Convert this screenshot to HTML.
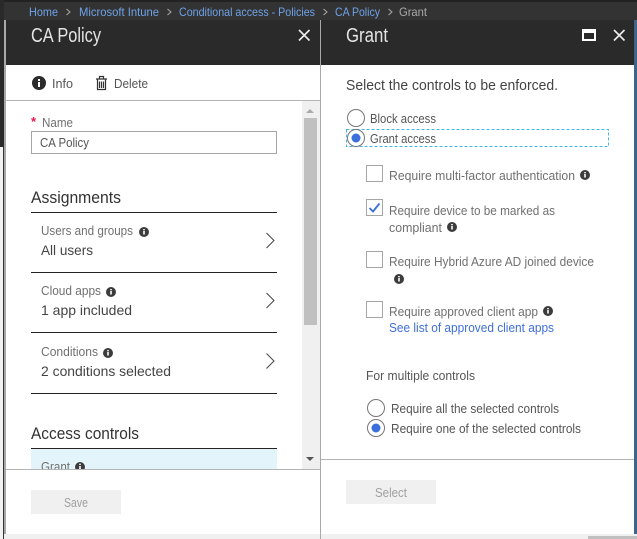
<!DOCTYPE html>
<html><head><meta charset="utf-8"><style>
html,body{margin:0;padding:0;background:#fff;width:637px;height:539px;overflow:hidden}
svg{display:block}
text{font-family:"Liberation Sans",sans-serif;fill:#555;white-space:pre}
.bc{font-size:12px;fill:#6ea3e8}
.h{font-size:20px;fill:#e4e4e4}
.s{font-size:13px}
.m{font-size:14px;fill:#444}
.g{fill:#707070;font-size:13px}
.sec{font-size:17px;fill:#333}
.inf{fill:#3c3c3c}
.rad{fill:#fff;stroke:#767676;stroke-width:1}
.chk{fill:#fff;stroke:#a6a6a6;stroke-width:1}
.chev{fill:none;stroke:#444;stroke-width:1}
</style></head><body>
<svg width="637" height="539" viewBox="0 0 637 539" xmlns="http://www.w3.org/2000/svg">
<rect width="637" height="539" fill="#fff"/>
<!-- top bar -->
<rect width="637" height="20" fill="#333"/>
<rect width="637" height="2" fill="#222"/>
<rect x="0" y="0" width="4" height="147" fill="#2a2a2a"/>
<rect x="0" y="147" width="3" height="392" fill="#f2f2f2"/>
<rect x="3" y="147" width="1" height="392" fill="#333"/>
<rect x="4" y="20" width="2" height="514" fill="#a8a8a8"/>
<text class="bc" x="29" y="16" textLength="29" lengthAdjust="spacingAndGlyphs">Home</text>
<path d="M66.500 9l3.500 3-3.500 3M167.500 9l3.500 3-3.500 3M323.500 9l3.500 3-3.500 3M388.500 9l3.500 3-3.500 3" fill="none" stroke="#aaa"/>
<text class="bc" x="79" y="16" textLength="80" lengthAdjust="spacingAndGlyphs">Microsoft Intune</text>
<text class="bc" x="179" y="16" textLength="136" lengthAdjust="spacingAndGlyphs">Conditional access - Policies</text>
<text class="bc" x="335" y="16" textLength="45" lengthAdjust="spacingAndGlyphs">CA Policy</text>
<text class="bc" x="399" y="16" textLength="28" lengthAdjust="spacingAndGlyphs" style="fill:#aaa">Grant</text>

<!-- left blade header -->
<rect x="6" y="20" width="314" height="45" fill="#2a2a2a"/>
<text class="h" x="31" y="42" textLength="70" lengthAdjust="spacingAndGlyphs">CA Policy</text>
<path d="M299 30l10.500 10.500M309.500 30L299 40.500" stroke="#eee" stroke-width="1.600" fill="none"/>

<!-- commands -->
<circle cx="39" cy="83" r="7" fill="#2b2b2b"/>
<rect x="38" y="82" width="2" height="5" fill="#fff"/><rect x="38" y="79" width="2" height="2" fill="#fff"/>
<path d="M96 79h11M99.500 78.500v-2h4v2M97.500 79.500v10h8v-10M99.500 81.500v6.500M101.500 81.500v6.500M103.500 81.500v6.500" stroke="#333" stroke-width="1.200" fill="none"/>
<text class="s" x="52" y="88" textLength="21" lengthAdjust="spacingAndGlyphs">Info</text>
<text class="s" x="114" y="88" textLength="34" lengthAdjust="spacingAndGlyphs">Delete</text>
<rect x="6" y="100" width="314" height="1" fill="#b4b4b4"/>

<!-- scrollbar -->
<rect x="302" y="101" width="18" height="368" fill="#f0f0f0"/>
<rect x="304" y="118" width="13" height="207" fill="#c0c0c0"/>
<path d="M306 113l4-4 4 4z" fill="#aaa"/>
<path d="M306 457l4 4 4-4z" fill="#555"/>

<!-- form -->
<text x="31" y="126" style="font-size:13px;fill:#e8174f;font-weight:bold">*</text>
<text class="g" x="42" y="127" textLength="31" lengthAdjust="spacingAndGlyphs">Name</text>
<rect x="31.500" y="131.500" width="245" height="22" fill="#fff" stroke="#a6a6a6"/>
<text class="s" x="40" y="147" textLength="49" lengthAdjust="spacingAndGlyphs">CA Policy</text>

<text class="sec" x="31" y="203" textLength="90" lengthAdjust="spacingAndGlyphs">Assignments</text>
<rect x="31" y="212" width="246" height="1" fill="#222"/>
<text class="g" x="41" y="235" textLength="92" lengthAdjust="spacingAndGlyphs">Users and groups</text>
<circle class="inf" cx="144" cy="232" r="5"/><rect x="143.200" y="231" width="1.600" height="3.500" fill="#fff"/><rect x="143.200" y="229" width="1.600" height="1.300" fill="#fff"/>
<text class="m" x="41" y="255" textLength="52" lengthAdjust="spacingAndGlyphs">All users</text>
<path class="chev" d="M266.500 233l7.500 7.500-7.500 7.500"/>
<rect x="31" y="272" width="246" height="1" fill="#222"/>
<text class="g" x="41" y="295" textLength="60" lengthAdjust="spacingAndGlyphs">Cloud apps</text>
<circle class="inf" cx="111" cy="292" r="5"/><rect x="110.200" y="291" width="1.600" height="3.500" fill="#fff"/><rect x="110.200" y="289" width="1.600" height="1.300" fill="#fff"/>
<text class="m" x="41" y="315" textLength="91" lengthAdjust="spacingAndGlyphs">1 app included</text>
<path class="chev" d="M266.500 293l7.500 7.500-7.500 7.500"/>
<rect x="31" y="332" width="246" height="1" fill="#222"/>
<text class="g" x="41" y="356" textLength="57" lengthAdjust="spacingAndGlyphs">Conditions</text>
<circle class="inf" cx="108" cy="353" r="5"/><rect x="107.200" y="352" width="1.600" height="3.500" fill="#fff"/><rect x="107.200" y="350" width="1.600" height="1.300" fill="#fff"/>
<text class="m" x="41" y="376" textLength="130" lengthAdjust="spacingAndGlyphs">2 conditions selected</text>
<path class="chev" d="M266.500 353.500l7.500 7.500-7.500 7.500"/>
<rect x="31" y="393" width="246" height="1" fill="#222"/>
<text class="sec" x="31" y="439" textLength="108" lengthAdjust="spacingAndGlyphs">Access controls</text>
<rect x="31" y="449" width="246" height="20" fill="#e3f5fb"/>
<rect x="31" y="448" width="246" height="1" fill="#222"/>
<text class="g" x="41" y="471" textLength="29" lengthAdjust="spacingAndGlyphs">Grant</text>
<circle class="inf" cx="80" cy="467" r="5"/><rect x="79.200" y="463.700" width="1.600" height="1.300" fill="#fff"/><rect x="79.200" y="466" width="1.600" height="3" fill="#fff"/>
<rect x="6" y="469" width="314" height="65" fill="#fff"/>
<rect x="6" y="469" width="314" height="1" fill="#b4b4b4"/>
<rect x="31" y="490" width="90" height="24" fill="#f0f0f0"/>
<text class="s" x="64" y="507" textLength="24" lengthAdjust="spacingAndGlyphs" style="fill:#a0a0a0">Save</text>
<rect x="4" y="534" width="316" height="5" fill="#f0f0f0"/>

<!-- right blade -->
<rect x="320" y="20" width="1" height="519" fill="#a8a8a8"/>
<rect x="321" y="20" width="313" height="45" fill="#2a2a2a"/>
<rect x="634" y="20" width="3" height="519" fill="#3f6488"/>
<text class="h" x="346" y="42" textLength="42" lengthAdjust="spacingAndGlyphs">Grant</text>
<rect x="583" y="30" width="12" height="10" fill="none" stroke="#fff" stroke-width="2"/>
<rect x="583" y="30" width="12" height="3" fill="#fff"/>
<path d="M614 30l10.500 10.500M624.500 30L614 40.500" stroke="#eee" stroke-width="1.600" fill="none"/>

<text x="346" y="90" textLength="212" lengthAdjust="spacingAndGlyphs" style="font-size:15px;fill:#444">Select the controls to be enforced.</text>
<circle class="rad" cx="356" cy="118" r="8.500"/>
<text class="s" x="370" y="123" textLength="66" lengthAdjust="spacingAndGlyphs">Block access</text>
<rect x="346.500" y="129.500" width="262" height="17" fill="none" stroke="#45b5e8" stroke-dasharray="3 2"/>
<circle class="rad" cx="356" cy="138" r="8.500"/>
<circle cx="356" cy="138" r="4.500" fill="#3a6fdc"/>
<text class="s" x="370" y="143" textLength="66" lengthAdjust="spacingAndGlyphs">Grant access</text>

<rect class="chk" x="366.500" y="165.500" width="16" height="16"/>
<text class="g" x="389" y="180" textLength="186" lengthAdjust="spacingAndGlyphs">Require multi-factor authentication</text>
<circle class="inf" cx="585" cy="175" r="5"/><rect x="584.200" y="174" width="1.600" height="3.500" fill="#fff"/><rect x="584.200" y="172" width="1.600" height="1.300" fill="#fff"/>

<rect class="chk" x="366.500" y="199.500" width="16" height="16"/>
<path d="M369.500 208l3.500 3.500 6.500-8" fill="none" stroke="#3a6fdc" stroke-width="1.800"/>
<text class="g" x="389" y="215" textLength="166" lengthAdjust="spacingAndGlyphs">Require device to be marked as</text>
<text class="g" x="389" y="232" textLength="53" lengthAdjust="spacingAndGlyphs">compliant</text>
<circle class="inf" cx="452" cy="227" r="5"/><rect x="451.200" y="226" width="1.600" height="3.500" fill="#fff"/><rect x="451.200" y="224" width="1.600" height="1.300" fill="#fff"/>

<rect class="chk" x="366.500" y="251.500" width="16" height="16"/>
<text class="g" x="389" y="266" textLength="205" lengthAdjust="spacingAndGlyphs">Require Hybrid Azure AD joined device</text>
<circle class="inf" cx="399" cy="279" r="5"/><rect x="398.200" y="278" width="1.600" height="3.500" fill="#fff"/><rect x="398.200" y="276" width="1.600" height="1.300" fill="#fff"/>

<rect class="chk" x="366.500" y="301.500" width="16" height="16"/>
<text class="g" x="389" y="316" textLength="149" lengthAdjust="spacingAndGlyphs">Require approved client app</text>
<circle class="inf" cx="548" cy="311" r="5"/><rect x="547.200" y="310" width="1.600" height="3.500" fill="#fff"/><rect x="547.200" y="308" width="1.600" height="1.300" fill="#fff"/>
<text class="s" x="389" y="332" textLength="165" lengthAdjust="spacingAndGlyphs" style="fill:#3f6fd8">See list of approved client apps</text>

<text class="s" x="366" y="380" textLength="109" lengthAdjust="spacingAndGlyphs">For multiple controls</text>
<circle class="rad" cx="376" cy="408" r="8.500"/>
<text class="s" x="391" y="413" textLength="168" lengthAdjust="spacingAndGlyphs">Require all the selected controls</text>
<circle class="rad" cx="376" cy="428" r="8.500"/>
<circle cx="376" cy="428" r="4.500" fill="#3a6fdc"/>
<text class="s" x="391" y="433" textLength="190" lengthAdjust="spacingAndGlyphs">Require one of the selected controls</text>

<rect x="321" y="459" width="313" height="1" fill="#b4b4b4"/>
<rect x="346" y="480" width="90" height="24" fill="#f0f0f0"/>
<text class="s" x="375" y="497" textLength="32" lengthAdjust="spacingAndGlyphs" style="fill:#a0a0a0">Select</text>
<rect x="321" y="534" width="316" height="5" fill="#f0f0f0"/>
<rect x="588" y="536" width="49" height="3" fill="#c0c0c0"/>
</svg>
</body></html>
